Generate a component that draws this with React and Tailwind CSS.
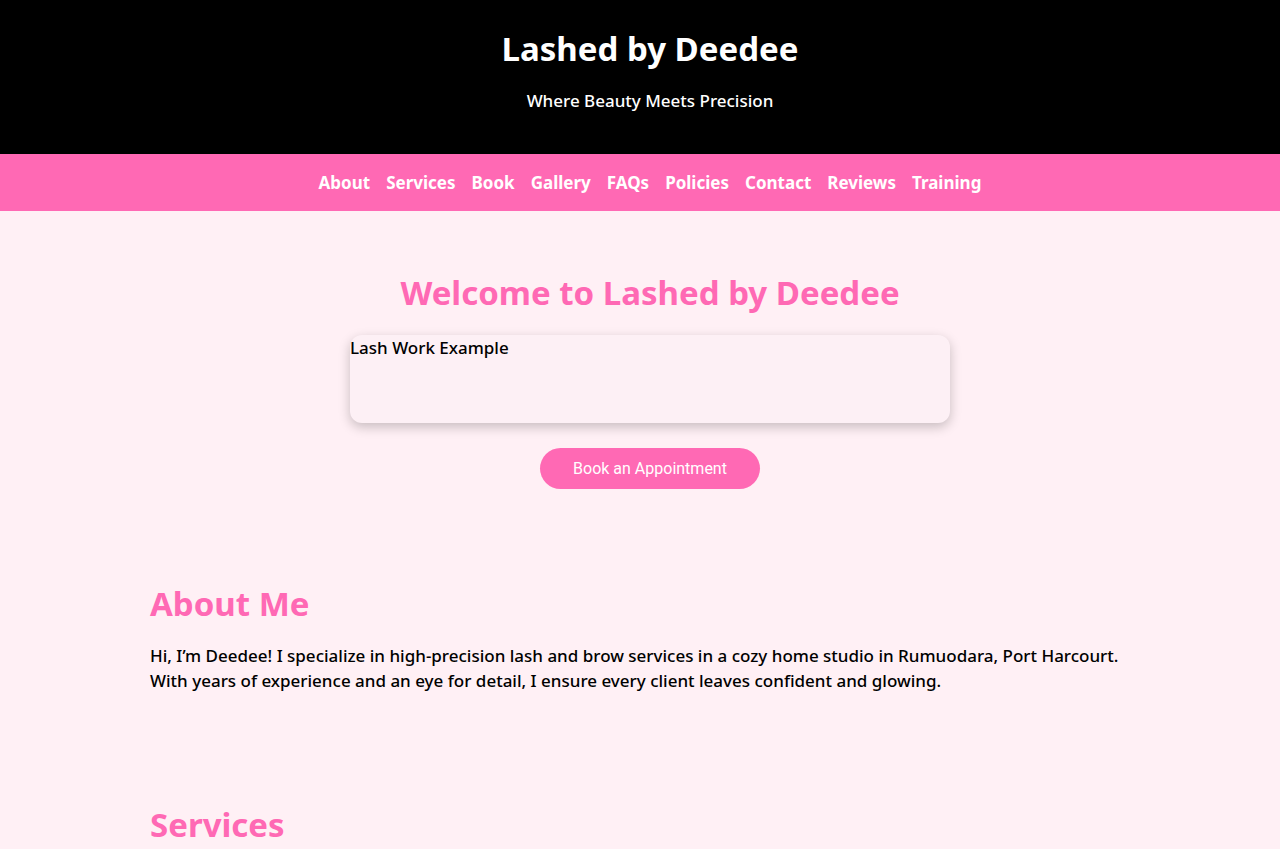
const NAV = ["About", "Services", "Book", "Gallery", "FAQs", "Policies", "Contact", "Reviews", "Training"];

const font = { fontFamily: '"Noto Sans", "Open Sans", sans-serif' };

export default function App() {
  return (
    <div className="min-h-screen bg-[#fff0f5] text-black" style={font}>
      <header className="bg-black pt-[28px] pb-[41px] pl-5 text-center text-white">
        <h1 className="text-[33px] font-bold leading-[42px]">Lashed by Deedee</h1>
        <p className="mt-[19px] text-[17px] font-medium leading-[24px]">Where Beauty Meets Precision</p>
      </header>

      <nav className="flex h-[57px] items-center justify-center gap-4 bg-[#ff69b4] pl-5">
        {NAV.map((item) => (
          <a key={item} href="#" className="text-[17px] font-bold text-white">
            {item}
          </a>
        ))}
      </nav>

      <section className="pt-[58px] pl-5 text-center">
        <h2 className="text-[33px] font-bold leading-[48px] text-[#ff69b4]">Welcome to Lashed by Deedee</h2>
        <div className="mx-auto mt-[18px] h-[88px] w-[600px] rounded-xl bg-[#fdf0f5] text-left shadow-[0_4px_12px_rgba(0,0,0,0.22)]">
          <span className="text-[17px] font-medium leading-[26px]">Lash Work Example</span>
        </div>
        <button
          type="button"
          className="mt-[25px] h-[41px] w-[220px] rounded-full bg-[#ff69b4] text-[16px] text-white"
          style={{ fontFamily: 'Roboto, sans-serif' }}
        >
          Book an Appointment
        </button>
      </section>

      <section className="mx-auto w-[980px] pt-[91px]">
        <h2 className="text-[33px] font-bold leading-[48px] text-[#ff69b4]">About Me</h2>
        <p className="mt-[15px] text-[17px] font-medium leading-[25px]">
          Hi, I’m Deedee! I specialize in high-precision lash and brow services in a cozy home studio in Rumuodara, Port Harcourt. With years of experience and an eye for detail, I ensure every client leaves confident and glowing.
        </p>
      </section>

      <section className="mx-auto w-[980px] pt-[108px] pb-10">
        <h2 className="text-[33px] font-bold leading-[48px] text-[#ff69b4]">Services</h2>
      </section>
    </div>
  );
}
